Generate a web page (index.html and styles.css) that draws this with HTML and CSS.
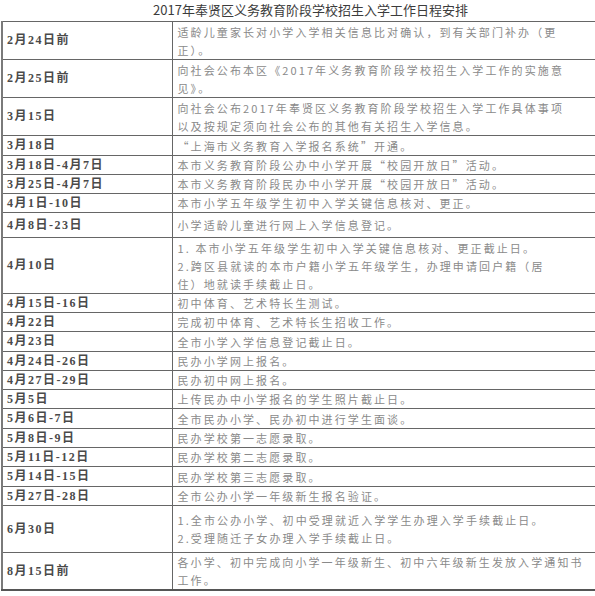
FILE: index.html
```html
<!DOCTYPE html>
<html lang="zh-CN">
<head>
<meta charset="utf-8">
<title>2017年奉贤区义务教育阶段学校招生入学工作日程安排</title>
<link rel="stylesheet" href="styles.css">
</head>
<body>
<div class="page">
  <div class="title">2017年奉贤区义务教育阶段学校招生入学工作日程安排</div>
  <table class="schedule">
    <colgroup><col class="col-date"><col class="col-task"></colgroup>
    <tbody>
      <tr class="r38"><td class="date">2月24日前</td><td class="task">适龄儿童家长对小学入学相关信息比对确认，到有关部门补办（更<br>正）。</td></tr>
      <tr class="r38"><td class="date">2月25日前</td><td class="task">向社会公布本区《2017年义务教育阶段学校招生入学工作的实施意<br>见》。</td></tr>
      <tr class="r38"><td class="date">3月15日</td><td class="task">向社会公布2017年奉贤区义务教育阶段学校招生入学工作具体事项<br>以及按规定须向社会公布的其他有关招生入学信息。</td></tr>
      <tr class="r20"><td class="date">3月18日</td><td class="task">“上海市义务教育入学报名系统”开通。</td></tr>
      <tr class="r19"><td class="date">3月18日-4月7日</td><td class="task">本市义务教育阶段公办中小学开展“校园开放日”活动。</td></tr>
      <tr class="r19"><td class="date">3月25日-4月7日</td><td class="task">本市义务教育阶段民办中小学开展“校园开放日”活动。</td></tr>
      <tr class="r19"><td class="date">4月1日-10日</td><td class="task">本市小学五年级学生初中入学关键信息核对、更正。</td></tr>
      <tr class="r25"><td class="date">4月8日-23日</td><td class="task">小学适龄儿童进行网上入学信息登记。</td></tr>
      <tr class="r56"><td class="date">4月10日</td><td class="task">1. 本市小学五年级学生初中入学关键信息核对、更正截止日。<br>2.跨区县就读的本市户籍小学五年级学生，办理申请回户籍（居<br>住）地就读手续截止日。</td></tr>
      <tr class="r19"><td class="date">4月15日-16日</td><td class="task">初中体育、艺术特长生测试。</td></tr>
      <tr class="r19"><td class="date">4月22日</td><td class="task">完成初中体育、艺术特长生招收工作。</td></tr>
      <tr class="r20"><td class="date">4月23日</td><td class="task">全市小学入学信息登记截止日。</td></tr>
      <tr class="r19"><td class="date">4月24日-26日</td><td class="task">民办小学网上报名。</td></tr>
      <tr class="r19"><td class="date">4月27日-29日</td><td class="task">民办初中网上报名。</td></tr>
      <tr class="r19"><td class="date">5月5日</td><td class="task">上传民办中小学报名的学生照片截止日。</td></tr>
      <tr class="r20"><td class="date">5月6日-7日</td><td class="task">全市民办小学、民办初中进行学生面谈。</td></tr>
      <tr class="r19"><td class="date">5月8日-9日</td><td class="task">民办学校第一志愿录取。</td></tr>
      <tr class="r19"><td class="date">5月11日-12日</td><td class="task">民办学校第二志愿录取。</td></tr>
      <tr class="r20"><td class="date">5月14日-15日</td><td class="task">民办学校第三志愿录取。</td></tr>
      <tr class="r19"><td class="date">5月27日-28日</td><td class="task">全市公办小学一年级新生报名验证。</td></tr>
      <tr class="r47"><td class="date">6月30日</td><td class="task">1.全市公办小学、初中受理就近入学学生办理入学手续截止日。<br>2.受理随迁子女办理入学手续截止日。</td></tr>
      <tr class="r37"><td class="date">8月15日前</td><td class="task">各小学、初中完成向小学一年级新生、初中六年级新生发放入学通知书<br>工作。</td></tr>
    </tbody>
  </table>
</div>
</body>
</html>
```

FILE: styles.css
```css
html, body {
  margin: 0;
  padding: 0;
  background: #ffffff;
}

.page {
  width: 595px;
  height: 596px;
  overflow: hidden;
}

.title {
  height: 21px;
  line-height: 20px;
  padding-left: 26px;
  text-align: center;
  font-family: "Noto Sans CJK SC", sans-serif;
  font-size: 13px;
  color: #3c3c3c;
  white-space: nowrap;
}

.schedule {
  border-collapse: collapse;
  table-layout: fixed;
  width: 640px;
  margin-left: 1px;
  border-left: 2px solid #7a7a7a;
  border-bottom: 2px solid #555555;
}

.col-date {
  width: 170px;
}

.schedule td {
  border: 1px solid #666666;
  padding: 0 0 0 4px;
  vertical-align: middle;
  white-space: nowrap;
  overflow: hidden;
}

.schedule td.task {
  padding-left: 5px;
}

.date {
  font-family: "Liberation Serif", "Noto Sans CJK SC", serif;
  font-size: 12px;
  font-weight: bold;
  line-height: 17px;
  letter-spacing: 1.5px;
  color: #4a4a4a;
}

.task {
  font-family: "Noto Sans CJK SC", sans-serif;
  font-size: 11px;
  line-height: 18px;
  letter-spacing: 2.1px;
  color: #8a8a8a;
}

.r19 { height: 19px; }
.r20 { height: 20px; }
.r25 { height: 25px; }
.r37 { height: 37px; }
.r38 { height: 38px; }
.r47 { height: 47px; }
.r56 { height: 56px; }
```
